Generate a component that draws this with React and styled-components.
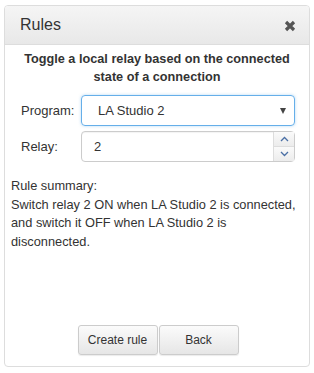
import React from 'react'
import styled, { createGlobalStyle } from 'styled-components'

const Global = createGlobalStyle`
  html, body {
    margin: 0;
    padding: 0;
    background: #fff;
    font-family: "Liberation Sans", Arial, sans-serif;
    color: #333;
  }
`

const Page = styled.div`
  width: 314px;
  height: 373px;
  padding: 5px 4px 6px 4px;
  box-sizing: border-box;
`

const Panel = styled.div`
  height: 100%;
  border: 1px solid #ddd;
  border-radius: 4px;
  box-sizing: border-box;
  display: flex;
  flex-direction: column;
  overflow: hidden;
`

const Header = styled.div`
  height: 38px;
  flex-shrink: 0;
  display: flex;
  align-items: center;
  justify-content: space-between;
  padding: 0 13px 0 15px;
  background: linear-gradient(to bottom, #f5f5f5 0%, #e8e8e8 100%);
  border-bottom: 1px solid #ddd;
  font-size: 16px;
  color: #333;
`

const Close = styled.svg`
  width: 12px;
  height: 12px;
  margin-top: 2px;
`

const Body = styled.div`
  flex: 1;
  display: flex;
  flex-direction: column;
  padding: 5px 5px 11px 5px;
`

const Title = styled.div`
  font-weight: bold;
  font-size: 12.7px;
  line-height: 18px;
  text-align: center;
  color: #333;
`

const Form = styled.div`
  display: grid;
  grid-template-columns: 60px 214px;
  row-gap: 5px;
  padding: 9px 0 0 11px;
  align-items: center;
`

const Label = styled.label`
  font-size: 13px;
  color: #333;
`

const Field = styled.div`
  height: 31px;
  box-sizing: border-box;
  border: 1px solid ${p => (p.focus ? '#66afe9' : '#ccc')};
  border-radius: 4px;
  box-shadow: ${p => (p.focus ? '0 0 3px rgba(102,175,233,.5)' : 'inset 0 1px 1px rgba(0,0,0,.05)')};
  display: flex;
  align-items: center;
  font-size: 13px;
  color: #333;
  position: relative;
  padding-left: ${p => p.pad}px;
`

const Caret = styled.span`
  position: absolute;
  right: 8px;
  top: 12px;
  width: 0;
  height: 0;
  border-left: 3.5px solid transparent;
  border-right: 3.5px solid transparent;
  border-top: 6px solid #444;
`

const Spin = styled.div`
  margin-left: auto;
  width: 20px;
  height: 100%;
  display: flex;
  flex-direction: column;
  border-left: 1px solid #ddd;
`

const SpinBtn = styled.div`
  flex: 1;
  display: flex;
  align-items: center;
  justify-content: center;
  background: linear-gradient(to bottom, #fafafa, #ececec);
  border-top: ${p => (p.bottom ? '1px solid #ddd' : 'none')};
`

const Summary = styled.div`
  font-size: 12.8px;
  line-height: 18.7px;
  color: #333;
  padding: 15px 0 0 1px;
`

const Buttons = styled.div`
  margin-top: auto;
  display: flex;
  justify-content: center;
  gap: 1px;
  padding-left: 2px;
`

const Button = styled.button`
  width: 80px;
  height: 30px;
  font-family: "Liberation Sans", Arial, sans-serif;
  font-size: 12px;
  color: #333;
  border: 1px solid #ccc;
  border-radius: 3px;
  background: linear-gradient(to bottom, #fbfbfb 0%, #e6e6e6 100%);
  box-shadow: 0 1px 1px rgba(0,0,0,.08);
  padding: 0;
`

const Chevron = ({ up }) => (
  <svg width="9" height="6" viewBox="0 0 9 6">
    <path
      d={up ? 'M1 5 L4.5 1.5 L8 5' : 'M1 1 L4.5 4.5 L8 1'}
      fill="none"
      stroke="#4a6fa5"
      strokeWidth="1.3"
    />
  </svg>
)

const App = () => (
  <Page>
    <Global />
    <Panel>
      <Header>
        <span>Rules</span>
        <Close viewBox="0 0 12 12">
          <path d="M2 2 L10 10 M10 2 L2 10" stroke="#555" strokeWidth="3.2" />
        </Close>
      </Header>
      <Body>
        <Title>
          Toggle a local relay based on the connected
          <br />
          state of a connection
        </Title>
        <Form>
          <Label>Program:</Label>
          <Field focus pad={16}>
            LA Studio 2
            <Caret />
          </Field>
          <Label>Relay:</Label>
          <Field pad={12}>
            2
            <Spin>
              <SpinBtn><Chevron up /></SpinBtn>
              <SpinBtn bottom><Chevron /></SpinBtn>
            </Spin>
          </Field>
        </Form>
        <Summary>
          Rule summary:
          <br />
          Switch relay 2 ON when LA Studio 2 is connected, and switch it OFF when LA Studio 2 is disconnected.
        </Summary>
        <Buttons>
          <Button>Create rule</Button>
          <Button>Back</Button>
        </Buttons>
      </Body>
    </Panel>
  </Page>
)

export default App
